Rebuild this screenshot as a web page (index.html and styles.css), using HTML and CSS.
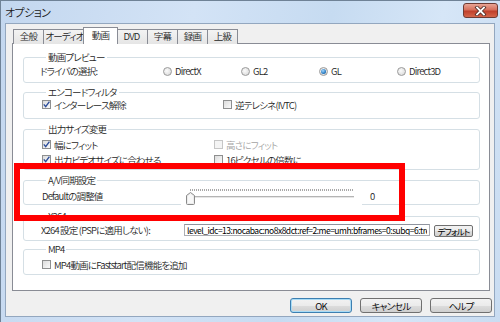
FILE: index.html
```html
<!DOCTYPE html>
<html lang="ja">
<head>
    <meta charset="UTF-8">
    <title>オプション</title>
    <link rel="stylesheet" href="styles.css">
</head>
<body>
    <div class="window">
        <!-- Title bar -->
        <div class="titlebar">
            <span class="title">オプション</span>
            <button class="close-btn">
                <svg width="13" height="10" viewBox="0 0 13 10">
                    <path d="M3 1.5 L10 8.5 M10 1.5 L3 8.5" stroke="#4a2a25" stroke-width="3.4" stroke-linecap="square"/>
                    <path d="M3 1.5 L10 8.5 M10 1.5 L3 8.5" stroke="#fff" stroke-width="1.8" stroke-linecap="square"/>
                </svg>
            </button>
        </div>

        <div class="client">
            <!-- Tabs -->
            <ul class="tabs">
                <li class="w30">全般</li>
                <li class="w42">オーディオ</li>
                <li class="w30 active">動画</li>
                <li class="w32">DVD</li>
                <li class="w30">字幕</li>
                <li class="w30">録画</li>
                <li class="w30">上級</li>
            </ul>

            <div class="panel">
                <fieldset class="group g1">
                    <legend>動画プレビュー</legend>
                    <div class="radio-row">
                        <span class="label">ドライバの選択:</span>
                        <label class="opt"><span class="radio"></span>DirectX</label>
                        <label class="opt"><span class="radio"></span>GL2</label>
                        <label class="opt"><span class="radio on"></span>GL</label>
                        <label class="opt"><span class="radio"></span>Direct3D</label>
                    </div>
                </fieldset>

                <fieldset class="group g2">
                    <legend>エンコードフィルタ</legend>
                    <div class="row">
                        <label class="opt col-a"><span class="check on"><svg width="9" height="9" viewBox="0 0 9 9"><path d="M1.8 4.4 L3.7 6.6 L7.4 1.6" stroke="#2c4d9a" stroke-width="1.4" fill="none"/></svg></span>インターレース解除</label>
                        <label class="opt"><span class="check"></span>逆テレシネ(IVTC)</label>
                    </div>
                </fieldset>

                <fieldset class="group g3">
                    <legend>出力サイズ変更</legend>
                    <div class="row tall">
                        <label class="opt col-b"><span class="check on"><svg width="9" height="9" viewBox="0 0 9 9"><path d="M1.8 4.4 L3.7 6.6 L7.4 1.6" stroke="#2c4d9a" stroke-width="1.4" fill="none"/></svg></span>幅にフィット</label>
                        <label class="opt disabled"><span class="check"></span>高さにフィット</label>
                    </div>
                    <div class="row tall">
                        <label class="opt col-b"><span class="check on"><svg width="9" height="9" viewBox="0 0 9 9"><path d="M1.8 4.4 L3.7 6.6 L7.4 1.6" stroke="#2c4d9a" stroke-width="1.4" fill="none"/></svg></span>出力ビデオサイズに合わせる</label>
                        <label class="opt"><span class="check"></span>16ピクセルの倍数に</label>
                    </div>
                </fieldset>

                <fieldset class="group g4">
                    <legend>A/V同期設定</legend>
                    <div class="slider-row">
                        <span class="label">Defaultの調整値</span>
                        <div class="slider">
                            <div class="ticks"></div>
                            <div class="track"></div>
                            <svg class="thumb" width="9" height="13" viewBox="0 0 9 13">
                                <path d="M0.5 3.5 L4.5 0.5 L8.5 3.5 L8.5 11.5 Q8.5 12.5 7.5 12.5 L1.5 12.5 Q0.5 12.5 0.5 11.5 Z" fill="#ececec" stroke="#8a8a8a"/>
                                <path d="M2 4 L4.5 2 L7 4 L7 11 L2 11 Z" fill="#f8f8f8"/>
                            </svg>
                        </div>
                        <span class="value">0</span>
                    </div>
                </fieldset>

                <fieldset class="group g5">
                    <legend>X264</legend>
                    <div class="row x264">
                        <span class="label">X264 設定 (PSPに適用しない):</span>
                        <input class="textbox" type="text" value="level_idc=13:nocabac:no8x8dct:ref=2:me=umh:bframes=0:subq=6:trellis=0" readonly>
                        <button class="small-btn">デフォルト</button>
                    </div>
                </fieldset>

                <fieldset class="group g6">
                    <legend>MP4</legend>
                    <div class="row">
                        <label class="opt"><span class="check"></span>MP4動画にFaststart配信機能を追加</label>
                    </div>
                </fieldset>

                <div class="highlight"></div>
            </div>

            <!-- Dialog buttons -->
            <div class="actions">
                <button class="btn default">OK</button>
                <button class="btn">キャンセル</button>
                <button class="btn">ヘルプ</button>
            </div>
        </div>
    </div>
</body>
</html>
```

FILE: styles.css
```css
/* Basic Reset */
* {
    margin: 0;
    padding: 0;
    box-sizing: border-box;
}

body {
    width: 500px;
    height: 322px;
    overflow: hidden;
    font-family: "Noto Sans CJK JP", "Noto Sans", sans-serif;
    font-size: 9.5px;
    font-weight: 350;
    font-feature-settings: "palt";
    letter-spacing: -0.8px;
    color: #1e1e1e;
}

/* Window frame */
.window {
    display: flex;
    flex-direction: column;
    height: 322px;
    border-top: 1px solid #6f8296;
    border-left: 1px solid #6f8296;
    background: linear-gradient(100deg, #c3d7ef 0%, #d3e3f6 35%, #c6dbf1 60%, #d6e6f7 80%, #c9dcf1 100%);
}

.titlebar {
    display: flex;
    align-items: flex-start;
    height: 22px;
    padding-left: 4px;
}

.title {
    font-size: 11px;
    line-height: 22px;
    letter-spacing: -0.6px;
    color: #1a1a1a;
}

.close-btn {
    display: flex;
    align-items: center;
    justify-content: center;
    margin: 2px 2px 0 auto;
    width: 35px;
    height: 15px;
    border: 1px solid #6e3b33;
    border-radius: 3px;
    background: linear-gradient(#e9a595 0%, #d6705c 45%, #c0402b 55%, #d4654a 100%);
}

/* Client area */
.client {
    display: flex;
    flex-direction: column;
    height: 294px;
    margin: 0 5px 0 4px;
    border: 1px solid #93a7bf;
    background: #f0f0f0;
}

/* Tabs */
.tabs {
    display: flex;
    align-items: flex-end;
    list-style: none;
    height: 17px;
    margin: 3px 0 -1px;
    padding-left: 7px;
    position: relative;
    z-index: 1;
}

.tabs li {
    height: 15px;
    line-height: 13px;
    text-align: center;
    white-space: nowrap;
    border: 1px solid #898c95;
    border-bottom: none;
    margin-left: -1px;
    background: linear-gradient(#f3f3f3, #e5e5e5);
}

.tabs li:first-child {
    margin-left: 0;
}

.tabs .w30 { width: 31px; }
.tabs .w32 { width: 33px; }
.tabs .w42 { width: 43px; }

.tabs li.active {
    width: 35px;
    height: 17px;
    margin: 0 -2px 0 -3px;
    background: #fff;
    line-height: 15px;
    position: relative;
}

/* Tab panel */
.panel {
    position: relative;
    width: 478px;
    height: 248px;
    margin-left: 6px;
    padding: 7px 9px 0 10px;
    background: #fff;
    border: 1px solid #898c95;
}

/* Group boxes */
.group {
    border: 1px solid #d5dfe5;
    border-radius: 3px;
    padding-left: 17px;
}

.group legend {
    margin-left: 5px;
    padding: 0 2px;
    line-height: 12px;
}

.g1 { padding-top: 1px; padding-bottom: 5px; }
.g2 { margin-top: 3px; padding-bottom: 7px; }
.g3 { margin-top: 4px; padding-top: 2px; padding-bottom: 2px; }
.g4 { margin-top: 4px; padding-top: 1px; }
.g5 { margin-top: 5px; padding-bottom: 3px; }
.g6 { margin-top: 2px; padding-top: 3px; padding-bottom: 3px; }

.row {
    display: flex;
    align-items: center;
    height: 13px;
}

.row.tall {
    height: 15px;
}

.radio-row {
    display: grid;
    grid-template-columns: 123px repeat(4, 78px);
    align-items: center;
    height: 13px;
    margin-left: -1px;
}

.opt {
    display: flex;
    align-items: center;
    gap: 3px;
    white-space: nowrap;
}

.col-a { width: 181px; }
.col-b { width: 172px; }

.opt.disabled {
    color: #a3a3a3;
}

.opt.disabled .check {
    border-color: #c6c6c6;
    background: #f4f4f4;
}

.check {
    display: inline-flex;
    flex-shrink: 0;
    width: 9px;
    height: 9px;
    margin-left: 1px;
    border: 1px solid #8e8f8f;
    background: linear-gradient(135deg, #dcdcdc, #fafafa);
}

.check svg {
    margin: -1px;
}

.radio {
    display: inline-flex;
    flex-shrink: 0;
    align-items: center;
    justify-content: center;
    width: 9px;
    height: 9px;
    border: 1px solid #9a9a9a;
    border-radius: 50%;
    background: radial-gradient(circle at 40% 40%, #fbfbfb, #d4d4d4);
}

.radio.on::after {
    content: "";
    width: 5px;
    height: 5px;
    border-radius: 50%;
    background: radial-gradient(circle at 40% 35%, #9fd6ff, #1b6fb8 70%, #16466f);
}

/* A/V slider */
.slider-row {
    display: flex;
    align-items: center;
    height: 18px;
    margin-bottom: -1px;
    margin-left: 1px;
}

.slider-row .label {
    width: 139px;
}

.slider {
    position: relative;
    width: 181px;
    height: 18px;
    background: #fff;
}

.ticks {
    position: absolute;
    top: 2px;
    left: 9px;
    width: 163px;
    height: 2px;
    background: repeating-linear-gradient(90deg, #a8a8a8 0 1px, transparent 1px 2px);
}

.track {
    position: absolute;
    top: 9px;
    left: 5px;
    width: 168px;
    height: 3px;
    border-top: 1px solid #b4b4b4;
    border-bottom: 1px solid #fff;
    background: #e6e6e6;
}

.thumb {
    position: absolute;
    top: 5px;
    left: 5px;
}

.value {
    margin-left: 8px;
}

/* X264 row */
.x264 {
    height: 15px;
}

.x264 .label {
    width: 143px;
    white-space: nowrap;
}

.textbox {
    width: 246px;
    height: 12px;
    padding: 0 2px;
    border: 1px solid #abadb3;
    border-top-color: #8f949e;
    font-family: "Noto Sans CJK JP", "Noto Sans", sans-serif;
    font-size: 8.5px;
    letter-spacing: -0.5px;
    line-height: 10px;
    color: #000;
    outline: none;
}

.small-btn {
    width: 39px;
    height: 12px;
    margin-left: 4px;
    margin-top: 3px;
    border: 1px solid #707070;
    border-radius: 2px;
    background: linear-gradient(#f2f2f2 0%, #ebebeb 50%, #dddddd 51%, #cfcfcf 100%);
    font-family: inherit;
    font-size: 8.5px;
    letter-spacing: -0.8px;
    line-height: 10px;
    white-space: nowrap;
    font-feature-settings: "palt";
}

/* Annotation box */
.highlight {
    position: absolute;
    left: 1px;
    top: 119px;
    width: 391px;
    height: 58px;
    border: 6px solid #ff0000;
}

/* Dialog buttons */
.actions {
    display: flex;
    justify-content: flex-end;
    gap: 8px;
    margin-top: 7px;
    padding-right: 2px;
}

.btn {
    width: 62px;
    height: 15px;
    border: 1px solid #707070;
    border-radius: 3px;
    background: linear-gradient(#f2f2f2 0%, #ebebeb 50%, #dddddd 51%, #cfcfcf 100%);
    font-family: inherit;
    font-size: 9.5px;
    font-weight: 350;
    letter-spacing: -0.8px;
    line-height: 12px;
    font-feature-settings: "palt";
}

.btn.default {
    border-color: #3c7fb1;
    box-shadow: inset 0 0 0 1px #a8dbf5;
}
```
